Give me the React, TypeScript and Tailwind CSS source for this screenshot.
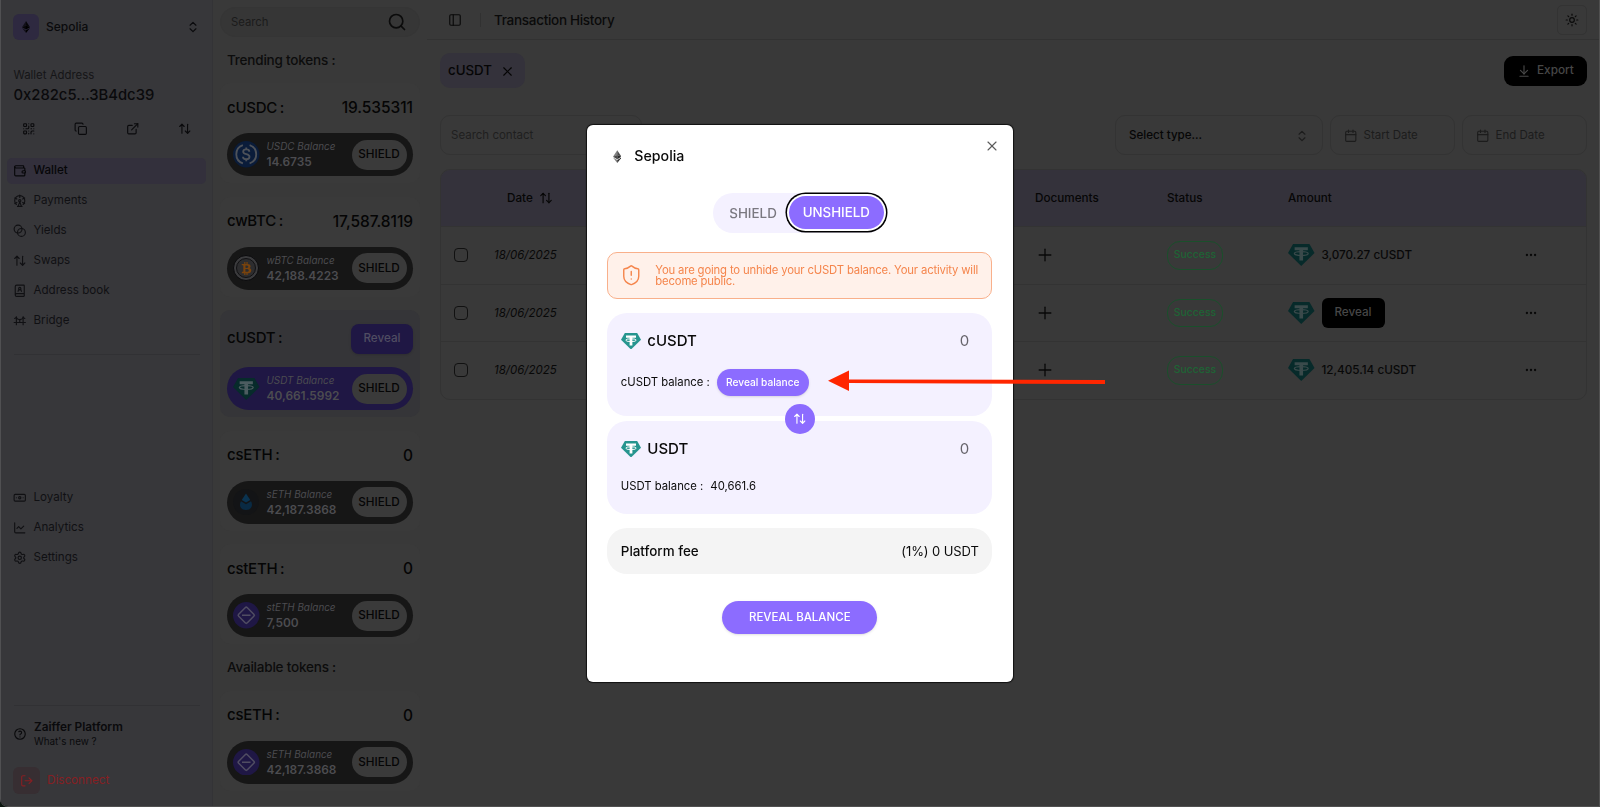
import type { ReactNode } from "react";
import {
  ArrowDownToLine,
  ArrowUpDown,
  Banknote,
  Blend,
  BookUser,
  Calendar,
  ChartLine,
  ChevronsUpDown,
  Copy,
  Ellipsis,
  ExternalLink,
  FerrisWheel,
  LogOut,
  PanelLeft,
  Plus,
  QrCode,
  Search,
  Settings,
  Sun,
  Wallet,
  X,
} from "lucide-react";
import { FaBtc } from "react-icons/fa6";
import { TbBuildingBridge, TbHelp } from "react-icons/tb";

function EthIcon({ className }: { className?: string }) {
  return (
    <svg viewBox="0 0 16 24" className={className}>
      <path d="M8 0 0 12.3 8 9z" fill="currentColor" opacity=".6" />
      <path d="M8 0l8 12.3L8 9z" fill="currentColor" opacity=".85" />
      <path d="M8 9 0 12.3 8 17z" fill="currentColor" opacity=".85" />
      <path d="M8 9l8 3.3L8 17z" fill="currentColor" />
      <path d="M0 14l8 4.7V24z" fill="currentColor" opacity=".6" />
      <path d="M16 14l-8 4.7V24z" fill="currentColor" />
    </svg>
  );
}

function UsdtIcon({ className, mark }: { className?: string; mark: string }) {
  return (
    <svg viewBox="0 0 26 22" className={className} preserveAspectRatio="none">
      <path d="M5 0h16l5 9-13 13L0 9z" fill="currentColor" />
      <path d="M6.500 3.200h13v3h-4.700v10.300h-3.600V6.200H6.500z" fill={mark} />
      <ellipse cx="13" cy="9.600" rx="6.800" ry="1.900" fill="none" stroke={mark} strokeWidth="1.200" />
    </svg>
  );
}

function TokenIcon({ name }: { name: string }) {
  if (name === "usdc")
    return (
      <svg viewBox="0 0 26 26" className="size-[26.500px] shrink-0" fill="none" stroke="#4e5259" strokeWidth="1.800">
        <circle cx="13" cy="13" r="13" fill="#0a1c3a" stroke="none" />
        <path d="M9.700 4a9.500 9.500 0 0 0 0 18M16.300 4a9.500 9.500 0 0 1 0 18" />
        <path d="M16 10.500c0-1.500-1.200-2.300-3-2.300s-3 .8-3 2.300c0 3.300 6.200 1.600 6.200 5 0 1.500-1.300 2.400-3.200 2.400s-3.200-.9-3.200-2.400M13 6.300v1.900M13 17.900v1.900" />
      </svg>
    );
  if (name === "wbtc")
    return (
      <span className="flex size-[26px] shrink-0 items-center justify-center rounded-full border border-[#0b0b0d] bg-[#3b3b3d] p-[2px]">
        <span className="flex size-full items-center justify-center rounded-full border border-[#111113] bg-[#2d2d2f]">
          <FaBtc className="size-[13px] text-[#7a430c]" />
        </span>
      </span>
    );
  if (name === "usdt")
    return <UsdtIcon className="h-[22px] w-[26.500px] shrink-0 text-[#072b2b]" mark="#4c5c60" />;
  if (name === "lido")
    return (
      <svg viewBox="0 0 26 26" className="size-[26px] shrink-0">
        <circle cx="13" cy="13" r="13" fill="#131416" />
        <path d="M13 4.500l4.300 6.600L13 13.600l-4.300-2.500z" fill="#0a3350" />
        <path d="M8 12.300l5 2.900 5-2.900c2 3 1.400 8.700-5 8.700s-7-5.700-5-8.700z" fill="#092a43" />
      </svg>
    );
  return (
    <svg viewBox="0 0 26 26" className="size-[26.500px] shrink-0" fill="none" stroke="#504d62" strokeWidth="1.500">
      <circle cx="13" cy="13" r="13" fill="#1f1745" stroke="none" />
      <rect x="7" y="7" width="12" height="12" rx="1.500" transform="rotate(45 13 13)" />
      <path d="M8.800 13h8.400" />
    </svg>
  );
}

type Token = {
  symbol: string;
  value?: string;
  icon: string;
  label: string;
  balance: string;
};

const trending: Token[] = [
  { symbol: "cUSDC", value: "19.535311", icon: "usdc", label: "USDC", balance: "14.6735" },
  { symbol: "cwBTC", value: "17,587.8119", icon: "wbtc", label: "wBTC", balance: "42,188.4223" },
  { symbol: "cUSDT", icon: "usdt", label: "USDT", balance: "40,661.5992" },
  { symbol: "csETH", value: "0", icon: "lido", label: "sETH", balance: "42,187.3868" },
  { symbol: "cstETH", value: "0", icon: "steth", label: "stETH", balance: "7,500" },
];

const available: Token[] = [
  { symbol: "csETH", value: "0", icon: "steth", label: "sETH", balance: "42,187.3868" },
];

function TokenCard({ token }: { token: Token }) {
  const active = !token.value;
  return (
    <div
      className={`shrink-0 rounded-[10px] px-[7px] pt-[13.500px] pb-[7px] ${active ? "bg-[#353538]" : "bg-[#3a3a3a]"}`}
    >
      <div
        className={`flex items-center justify-between text-[15.500px] font-medium text-[#050505] ${active ? "h-[30px]" : "h-[23px]"}`}
      >
        <span className="text-[15px] tracking-[-0.25px] [word-spacing:-1px]">{token.symbol} :</span>
        {active ? (
          <button className="h-[30px] w-[62px] rounded-[8px] bg-[#1f1744] text-[11.700px] font-medium text-[#504d62] shadow">
            Reveal
          </button>
        ) : (
          <span className="tracking-[-0.05px]">{token.value}</span>
        )}
      </div>
      <div
        className={`mt-[13.500px] flex h-[43px] items-center rounded-full pr-[6.500px] pl-[6px] ${active ? "bg-[#1f1744]" : "bg-[#161616]"}`}
      >
        <TokenIcon name={token.icon} />
        <div className={`flex-1 pb-[1px] whitespace-nowrap text-[#4c4c50] ${token.icon === "wbtc" || token.icon === "lido" ? "ml-[7.500px]" : "ml-[7px]"}`}>
          <p className="text-[9.900px] leading-[15px] italic">{token.label} Balance</p>
          <p className="text-[11.900px] leading-[15px] font-semibold">{token.balance}</p>
        </div>
        <button className="h-[30px] w-[55px] rounded-full bg-[#3a3a3a] pt-px text-[11.700px] font-medium text-[#050505]">
          SHIELD
        </button>
      </div>
    </div>
  );
}

function NavItem({ icon, label, active }: { icon: ReactNode; label: string; active?: boolean }) {
  return (
    <a
      className={`flex h-[26px] items-center gap-[7px] rounded-[5px] px-[6px] text-[11.600px] ${active ? "bg-[#33303c] font-medium text-[#060608]" : "text-[#101013]"}`}
    >
      {icon}
      {label}
    </a>
  );
}

function Sidebar() {
  return (
    <aside className="flex w-[213px] shrink-0 flex-col border-r border-l border-r-[#333336] border-l-[#505052] bg-[#37373a] px-[6px] text-[#0a0a0c]">
      <div className="mt-[14px] flex h-[26px] items-center px-[6px]">
        <span className="flex size-[26px] items-center justify-center rounded-[6px] bg-[#2e2940]">
          <EthIcon className="h-[12px] w-[8px] text-black" />
        </span>
        <span className="ml-[7px] flex-1 text-[12px] font-medium">Sepolia</span>
        <ChevronsUpDown size={14} />
      </div>
      <div className="mt-[26px] px-[6.500px]">
        <p className="text-[11.400px] leading-[18px] text-[#151517]">Wallet Address</p>
        <p className="text-[14.800px] leading-[22px] font-medium">0x282c5...3B4dc39</p>
      </div>
      <div className="mt-[9.500px] flex h-[26px] items-center justify-between pr-[15px] pl-[14.500px]">
        <QrCode size={13.5} />
        <Copy size={13.5} />
        <ExternalLink size={13.5} />
        <ArrowUpDown size={13.5} />
      </div>
      <nav className="mt-[16.500px] flex flex-col gap-1">
        <NavItem icon={<Wallet size={13.5} />} label="Wallet" active />
        <NavItem icon={<FerrisWheel size={13.5} />} label="Payments" />
        <NavItem icon={<Blend size={13.5} />} label="Yields" />
        <NavItem icon={<ArrowUpDown size={13.5} />} label="Swaps" />
        <NavItem icon={<BookUser size={13.5} />} label="Address book" />
        <NavItem icon={<TbBuildingBridge size={13.5} />} label="Bridge" />
      </nav>
      <div className="mx-[6.500px] mt-[20px] border-t border-[#313134]" />
      <nav className="mt-[130px] flex flex-col gap-1">
        <NavItem icon={<Banknote size={13.5} />} label="Loyalty" />
        <NavItem icon={<ChartLine size={13.5} />} label="Analytics" />
        <NavItem icon={<Settings size={13.5} />} label="Settings" />
      </nav>
      <div className="mx-[6.500px] mt-auto border-t border-[#313134]" />
      <div className="mt-[14px] flex h-[28px] items-center gap-[7px] px-[6px]">
        <TbHelp size={14} />
        <div>
          <p className="text-[11.800px] leading-[15px] font-semibold">Zaiffer Platform</p>
          <p className="text-[9.900px] leading-[13px]">What's new ?</p>
        </div>
      </div>
      <div className="mt-[19px] mb-[12px] flex h-[27px] items-center gap-[7px] px-[6px] text-[11.700px] text-[#861f23]">
        <span className="flex size-[27px] items-center justify-center rounded-[6px] bg-[#372e32]">
          <LogOut size={13.5} />
        </span>
        Disconnect
      </div>
    </aside>
  );
}

function TokenList() {
  return (
    <section className="flex w-[214px] shrink-0 flex-col overflow-hidden bg-[#393939] px-[7px]">
      <div className="mt-[7px] flex h-[30px] shrink-0 items-center justify-between rounded-full border border-[#353535] bg-[#363636] pr-[12px] pl-[10px] text-[11.300px] text-[#1b1b1b]">
        <span className="pt-px">Search</span>
        <Search size={20} strokeWidth={2} className="text-[#0b0b0b]" />
      </div>
      <h2 className="mt-[13px] h-[20px] shrink-0 px-[7px] text-[13.500px] leading-[20px] font-medium tracking-[-0.2px] text-[#0c0c0c]">
        Trending tokens :
      </h2>
      <div className="mt-[13px] flex flex-col gap-[13.500px]">
        {trending.map((t) => (
          <TokenCard key={t.symbol} token={t} />
        ))}
      </div>
      <h2 className="mt-[13px] h-[20px] shrink-0 px-[7px] text-[13.500px] leading-[20px] font-medium tracking-[-0.2px] text-[#0c0c0c]">
        Available tokens :
      </h2>
      <div className="mt-[13.500px]">
        {available.map((t) => (
          <TokenCard key={t.symbol} token={t} />
        ))}
      </div>
    </section>
  );
}

const rows = [
  { date: "18/06/2025", amount: "3,070.27 cUSDT" },
  { date: "18/06/2025", amount: null },
  { date: "18/06/2025", amount: "12,405.14 cUSDT" },
];

const columns = "grid grid-cols-[53px_541px_132px_121px_209px_1fr] items-center";

function HistoryTable() {
  return (
    <div className="mt-[14px] overflow-hidden rounded-[10px] border border-[#333333]">
      <div className={`${columns} h-[56px] bg-[#34323b] pt-px text-[11.700px] font-medium text-[#060606]`}>
        <span />
        <span className="flex items-center gap-[6px] pl-[13px]">
          Date <ArrowUpDown size={14} />
        </span>
        <span>Documents</span>
        <span>Status</span>
        <span>Amount</span>
        <span />
      </div>
      {rows.map((r, index) => (
        <div
          key={index}
          className={`${columns} h-[57.500px] border-t border-[#333333] text-[11.700px] text-[#080808]`}
        >
          <span className="ml-[13px] size-[14px] rounded-[4px] border border-[#111111]" />
          <span className="pt-px text-[11.500px] italic">{r.date}</span>
          <Plus size={20} strokeWidth={1.6} />
          <span className="flex h-[28.500px] w-[56px] items-center justify-center rounded-[13px] border border-[#1a4f2b] text-[10.400px] font-medium text-[#1e6435]">
            Success
          </span>
          <span className="flex items-center gap-[7px] font-medium">
            <UsdtIcon className="h-[22px] w-[26.500px] text-[#072a2a]" mark="#3a4a4b" />
            {r.amount ? (
              <span className="pt-px">{r.amount}</span>
            ) : (
              <button className="h-[30px] w-[63px] rounded-[6px] bg-black pt-px text-[11.700px] text-[#474747]">
                Reveal
              </button>
            )}
          </span>
          <Ellipsis size={14} className="ml-[27px]" />
        </div>
      ))}
    </div>
  );
}

function DateField({ label }: { label: string }) {
  return (
    <div className="flex h-[40px] w-[125px] items-center gap-[6px] rounded-[10px] border border-[#333333] pt-px pl-[13px] text-[11.500px] text-[#1c1c1c]">
      <Calendar size={13.5} />
      {label}
    </div>
  );
}

function History() {
  return (
    <main className="flex min-w-0 flex-1 flex-col border-r border-[#505050] bg-[#393939]">
      <header className="flex h-[40px] shrink-0 items-center border-b border-[#323232] pt-px pr-[12px] pl-[21px] text-[#0a0a0a]">
        <PanelLeft size={14} />
        <span className="ml-[18px] h-[14px] w-px bg-[#313131]" />
        <h1 className="ml-[13px] flex-1 pt-px text-[13.500px] font-medium tracking-[-0.3px]">Transaction History</h1>
        <button className="flex size-[30px] items-center justify-center rounded-[5px] border border-[#333333]">
          <Sun size={14} />
        </button>
      </header>
      <div className="flex flex-col pr-[12px] pl-[13px]">
        <div className="mt-[13px] flex h-[35px] items-center justify-between">
          <div className="flex h-[35px] w-[85px] items-center justify-between rounded-[10px] bg-[#34323b] pt-px pr-[10px] pl-[8px] text-[13.300px] font-medium text-[#050505]">
            cUSDT <X size={15} strokeWidth={1.8} />
          </div>
          <button className="flex h-[30px] w-[83px] items-center gap-[6px] rounded-[9px] bg-black pt-px pl-[13px] text-[11.800px] font-medium text-[#474747]">
            <ArrowDownToLine size={14} /> Export
          </button>
        </div>
        <div className="mt-[27px] flex gap-[7px]">
          <div className="flex h-[40px] w-[202px] items-center rounded-[10px] border border-[#333333] pt-[2px] pl-[10px] text-[11.500px] text-[#1f1f1f]">
            Search contact
          </div>
          <div className="ml-auto flex h-[40px] w-[208px] items-center justify-between rounded-[10px] border border-[#333333] pt-px pr-[13px] pl-[13px] text-[11.600px] font-medium text-[#060606]">
            Select type...
            <ChevronsUpDown size={14} className="text-[#1c1c1c]" />
          </div>
          <DateField label="Start Date" />
          <DateField label="End Date" />
        </div>
        <HistoryTable />
      </div>
    </main>
  );
}

function UnshieldDialog() {
  return (
    <div className="fixed inset-0 flex pt-[125px] pl-[586.500px]">
      <div className="relative flex h-[556.500px] w-[426.500px] flex-col items-center rounded-[6px] bg-white px-[20.800px] text-[#0a0a0a] shadow-[0_0_1px_1px_#111111]">
        <button className="absolute top-[12.500px] right-[13px] text-[#5a5a5a]">
          <X size={16} strokeWidth={1.6} />
        </button>
        <div className="mt-[20px] flex h-[22px] w-full items-center pl-[5.500px]">
          <EthIcon className="h-[13px] w-[8.500px] text-[#2c2c2c]" />
          <h2 className="ml-[13px] text-[14.200px] font-medium">Sepolia</h2>
        </div>
        <div className="mt-[25.500px] flex h-[40px] w-[174px] items-center justify-between rounded-full bg-[#f4f1ff] pr-[3px] pl-[16.500px] text-[13.400px] font-medium">
          <span className="pt-px text-[#7a7880]">SHIELD</span>
          <button className="h-[33px] w-[95px] rounded-full bg-[#8c6cff] pt-px text-[13.300px] text-white ring-[1.500px] ring-black ring-offset-2">
            UNSHIELD
          </button>
        </div>
        <div className="mt-[19.500px] flex h-[47px] w-full items-center rounded-[10px] border border-[#f9b08b] bg-[#fff1ea] pl-[12px] text-[#f5854c]">
          <svg
            viewBox="0 0 24 24"
            className="size-[22.500px] shrink-0"
            fill="none"
            stroke="currentColor"
            strokeWidth="1.500"
            strokeLinecap="round"
            strokeLinejoin="round"
          >
            <path d="M20 13c0 5-3.500 7.500-7.660 8.950a1 1 0 0 1-.67-.01C7.500 20.500 4 18 4 13V6a1 1 0 0 1 1-1c2 0 4.500-1.200 6.240-2.720a1.170 1.170 0 0 1 1.520 0C14.510 3.810 17 5 19 5a1 1 0 0 1 1 1z" />
            <path d="M12 8v4M12 16h.01" />
          </svg>
          <p className="ml-[12.500px] pt-[1.500px] text-[11.300px] leading-[11.700px] tracking-[-0.16px]">
            You are going to unhide your cUSDT balance. Your activity will
            <br />
            become public.
          </p>
        </div>
        <div className="relative mt-[13.500px] flex w-full flex-col gap-[5px]">
          <div className="h-[103px] rounded-[20px] bg-[#f4f1ff] px-[13.500px] pt-[17.500px]">
            <div className="flex h-[22px] items-center text-[15px] font-medium">
              <UsdtIcon className="h-[16.500px] w-[20px] text-[#26958f]" mark="#ffffff" />
              <span className="ml-[6.500px] flex-1">cUSDT</span>
              <span className="mr-[9.500px] pt-px font-normal text-[#66646b]">0</span>
            </div>
            <div className="mt-[17px] flex h-[27px] items-center text-[11.300px]">
              cUSDT balance :
              <button className="ml-[7px] h-[27px] w-[92px] rounded-full bg-[#8c6cff] text-[10.200px] font-medium text-white shadow-sm">
                Reveal balance
              </button>
            </div>
          </div>
          <div className="h-[93px] rounded-[20px] bg-[#f4f1ff] px-[13.500px] pt-[17.500px]">
            <div className="flex h-[22px] items-center text-[15px] font-medium">
              <UsdtIcon className="h-[16.500px] w-[20px] text-[#26958f]" mark="#ffffff" />
              <span className="ml-[6.500px] flex-1">USDT</span>
              <span className="mr-[9.500px] pt-px font-normal text-[#66646b]">0</span>
            </div>
            <div className="mt-[16px] flex h-[20px] items-center text-[11.300px]">
              USDT balance : <span className="ml-[7px]">40,661.6</span>
            </div>
          </div>
          <button className="absolute top-[91px] left-1/2 flex size-[30px] -translate-x-1/2 items-center justify-center rounded-full bg-[#8c6cff] text-white">
            <ArrowUpDown size={13.5} />
          </button>
        </div>
        <div className="mt-[14px] flex h-[46px] w-full items-center justify-between rounded-[20px] bg-[#f4f4f4] px-[13.500px] pt-[2px] text-[13.400px]">
          <span className="font-medium">Platform fee</span>
          <span className="text-[13px] tracking-[-0.1px]">(1%) 0 USDT</span>
        </div>
        <button className="mt-[27px] h-[33.500px] w-[155px] rounded-full bg-[#8c6cff] pt-px text-[11.500px] font-medium text-white shadow-sm">
          REVEAL BALANCE
        </button>
      </div>
      <svg viewBox="0 0 277 22" className="absolute top-[370px] left-[828px] h-[22px] w-[277px]">
        <path d="M0 10.700 21 .5v8.900L277 10v4L21 13v8z" fill="#ff2600" />
      </svg>
    </div>
  );
}

export default function App() {
  return (
    <div className="h-[807px] w-[1600px] overflow-hidden bg-[#0b140e] font-['Inter',sans-serif]">
      <div className="flex h-[807px] overflow-hidden rounded-bl-[8px] border-b border-[#505050]">
        <Sidebar />
        <TokenList />
        <History />
      </div>
      <UnshieldDialog />
    </div>
  );
}
